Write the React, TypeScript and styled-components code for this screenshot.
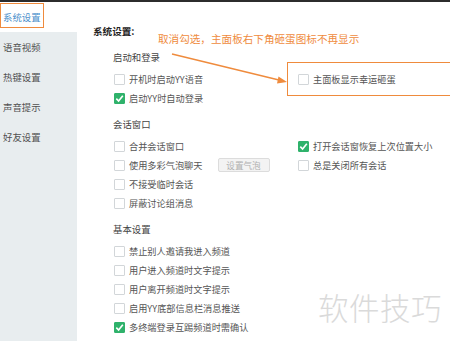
import React from 'react';
import styled, { createGlobalStyle } from 'styled-components';

const GlobalStyle = createGlobalStyle`
  html, body {
    margin: 0;
    padding: 0;
    background: #fff;
  }
  body {
    font-family: "Noto Sans CJK SC", "Microsoft YaHei", sans-serif;
    color: #555;
  }
`;

const ORANGE = '#ef8b3d';

const Page = styled.div`
  position: relative;
  width: 450px;
  height: 341px;
  overflow: hidden;
  border-top: 2px solid #2c2c2c;
  box-sizing: border-box;
  display: flex;
`;

const Sidebar = styled.div`
  width: 77px;
  flex-shrink: 0;
  display: flex;
  flex-direction: column;
  background: #e8edef;
`;

const NavItem = styled.div<{ $active?: boolean }>`
  position: relative;
  height: 30px;
  display: flex;
  align-items: center;
  padding-left: 3px;
  font-size: 9.4px;
  color: ${p => (p.$active ? '#4a8fcb' : '#505050')};
  background: ${p => (p.$active ? '#fff' : 'transparent')};

  ${p =>
    p.$active &&
    `
    &::after {
      content: '';
      position: absolute;
      left: 0;
      top: 1px;
      width: 44px;
      height: 25px;
      border: 1.5px solid ${ORANGE};
      box-sizing: border-box;
    }
  `}
`;

const Main = styled.div`
  flex: 1;
  padding: 22px 0 0 16px;
`;

const Title = styled.div`
  height: 14px;
  line-height: 14px;
  font-size: 9.6px;
  font-weight: bold;
  color: #222;
  margin-bottom: 12px;
`;

const Section = styled.div`
  padding-left: 20px;
  margin-bottom: 9.5px;
`;

const SectionTitle = styled.div`
  height: 14px;
  line-height: 14px;
  font-size: 9.4px;
  color: #444;
  margin-bottom: 5.5px;
`;

const Grid = styled.div`
  display: grid;
  grid-template-columns: 184px 1fr;
  grid-auto-rows: 19px;
`;

const Row = styled.label<{ $col?: number; $row?: number }>`
  position: relative;
  display: flex;
  align-items: center;
  gap: 4px;
  padding-left: 1px;
  font-size: 9.2px;
  color: #555;
  white-space: nowrap;
  grid-column: ${p => p.$col ?? 1};
  grid-row: ${p => p.$row ?? 'auto'};
`;

const Highlight = styled.div`
  position: absolute;
  left: -10px;
  right: -14px;
  top: -7.5px;
  bottom: -7.5px;
  border: 1.5px solid ${ORANGE};
  pointer-events: none;
`;

const Box = styled.span<{ $checked?: boolean }>`
  width: 11px;
  height: 11px;
  box-sizing: border-box;
  flex-shrink: 0;
  border: 1px solid ${p => (p.$checked ? '#2fb26b' : '#d2d6d9')};
  background: ${p => (p.$checked ? '#2fb26b' : '#fff')};
  border-radius: 1px;
  display: flex;
  align-items: center;
  justify-content: center;
`;

const SmallButton = styled.span`
  margin-left: 11px;
  width: 52px;
  height: 14px;
  box-sizing: border-box;
  border: 1px solid #dcdcdc;
  background: #f3f3f3;
  border-radius: 2px;
  color: #b0b0b0;
  font-size: 8.6px;
  display: flex;
  align-items: center;
  justify-content: center;
`;

const Note = styled.div`
  position: absolute;
  left: 158px;
  top: 29px;
  font-size: 10.6px;
  color: ${ORANGE};
  white-space: nowrap;
`;

const Arrow = styled.svg`
  position: absolute;
  left: 0;
  top: 0;
  pointer-events: none;
`;

const Watermark = styled.div`
  position: absolute;
  left: 318px;
  top: 283px;
  font-size: 30.5px;
  font-weight: 300;
  color: #dadada;
  letter-spacing: 0.5px;
  white-space: nowrap;
`;

const Check = ({ checked }: { checked?: boolean }) => (
  <Box $checked={checked}>
    {checked && (
      <svg width="9" height="9" viewBox="0 0 9 9">
        <path d="M1.3 4.6 L3.6 7 L7.8 1.8" fill="none" stroke="#fff" strokeWidth="1.6" />
      </svg>
    )}
  </Box>
);

type Item = { text: string; checked?: boolean; col?: number; row?: number; button?: string; highlight?: boolean };

const sections: { title: string; items: Item[] }[] = [
  {
    title: '启动和登录',
    items: [
      { text: '开机时启动YY语音', row: 1 },
      { text: '启动YY时自动登录', checked: true, row: 2 },
      { text: '主面板显示幸运砸蛋', col: 2, row: 1, highlight: true },
    ],
  },
  {
    title: '会话窗口',
    items: [
      { text: '合并会话窗口', row: 1 },
      { text: '使用多彩气泡聊天', row: 2, button: '设置气泡' },
      { text: '不接受临时会话', row: 3 },
      { text: '屏蔽讨论组消息', row: 4 },
      { text: '打开会话窗恢复上次位置大小', checked: true, col: 2, row: 1 },
      { text: '总是关闭所有会话', col: 2, row: 2 },
    ],
  },
  {
    title: '基本设置',
    items: [
      { text: '禁止别人邀请我进入频道' },
      { text: '用户进入频道时文字提示' },
      { text: '用户离开频道时文字提示' },
      { text: '启用YY底部信息栏消息推送' },
      { text: '多终端登录互踢频道时需确认', checked: true },
    ],
  },
];

const nav = ['系统设置', '语音视频', '热键设置', '声音提示', '好友设置'];

export default function App() {
  return (
    <Page>
      <GlobalStyle />
      <Sidebar>
        {nav.map((n, i) => (
          <NavItem key={n} $active={i === 0}>
            {n}
          </NavItem>
        ))}
      </Sidebar>
      <Main>
        <Title>系统设置:</Title>
        {sections.map(s => (
          <Section key={s.title}>
            <SectionTitle>{s.title}</SectionTitle>
            <Grid>
              {s.items.map(it => (
                <Row key={it.text} $col={it.col} $row={it.row}>
                  <Check checked={it.checked} />
                  <span>{it.text}</span>
                  {it.button && <SmallButton>{it.button}</SmallButton>}
                  {it.highlight && <Highlight />}
                </Row>
              ))}
            </Grid>
          </Section>
        ))}
      </Main>
      <Note>取消勾选，主面板右下角砸蛋图标不再显示</Note>
      <Arrow width="450" height="341" viewBox="0 0 450 341">
        <line x1="172" y1="52" x2="281" y2="78.5" stroke={ORANGE} strokeWidth="1.4" />
        <path d="M287 80 L278.5 74.6 L277 81.6 Z" fill={ORANGE} />
      </Arrow>
      <Watermark>软件技巧</Watermark>
    </Page>
  );
}
